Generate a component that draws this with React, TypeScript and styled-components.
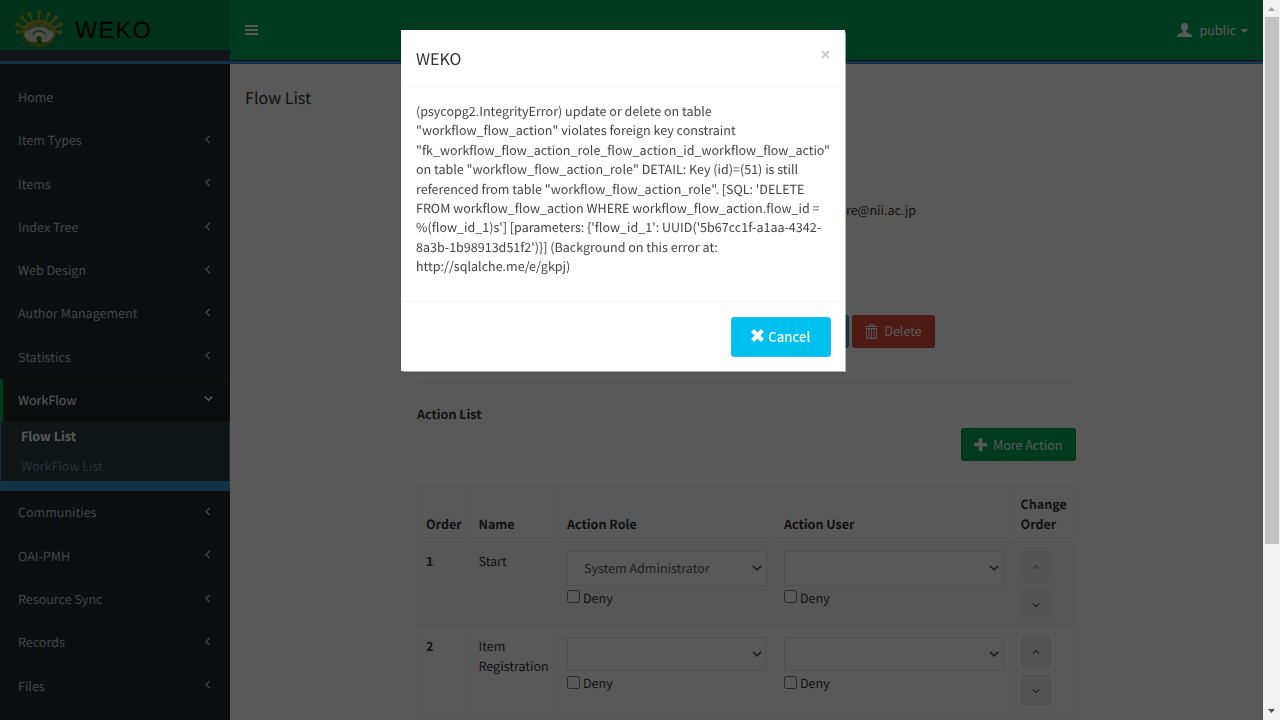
import React from "react";
import styled, { createGlobalStyle } from "styled-components";

const Global = createGlobalStyle`
  * { box-sizing: border-box; }
  html, body { margin: 0; padding: 0; overflow: hidden; }
  body {
    font-family: "Noto Sans CJK JP", "Noto Sans", sans-serif;
    font-size: 12.54px;
    line-height: 19.4px;
    color: #333;
    background: #fff;
    text-rendering: geometricPrecision;
  }
  svg { display: block; flex: none; }
`;

const Screen = styled.div`
  display: flex;
  width: 1280px;
  height: 720px;
  overflow: hidden;
`;
const Page = styled.div`
  display: flex;
  width: 1263px;
  height: 720px;
  overflow: hidden;
`;

/* Sidebar */
const Sidebar = styled.aside`
  width: 230px;
  flex: none;
  background: #222d32;
  overflow: hidden;
`;
const Brand = styled.div`
  display: flex;
  align-items: flex-start;
  height: 50px;
  padding: 10px 0 0 15px;
  gap: 12px;
  background: #008d4c;
`;
const BrandName = styled.span`
  font-family: "Liberation Sans", sans-serif;
  font-size: 23.5px;
  line-height: 41px;
  letter-spacing: 1.3px;
  color: #000;
`;
const BrandStrip = styled.div<{ $wide?: boolean }>`
  height: ${(p) => (p.$wide ? "14px" : "4px")};
  border-bottom: 3px solid #3a90c8;
  background: ${(p) => (p.$wide ? "#303c50" : "#222d50")};
`;
const Menu = styled.nav`
  padding-top: 11.5px;
`;
const MenuItem = styled.div<{ $active?: boolean }>`
  display: flex;
  align-items: center;
  justify-content: space-between;
  height: 43.3px;
  padding: ${(p) => (p.$active ? "0 17px 1.5px 15px" : "0 18px 1px 18px")};
  border-left: ${(p) => (p.$active ? "3px solid #00a65a" : "0")};
  color: ${(p) => (p.$active ? "#fff" : "#b8c7ce")};
  background: ${(p) => (p.$active ? "#1e282c" : "transparent")};
  svg { margin-top: -1px; }
`;
const SubMenu = styled.div`
  height: 69px;
  padding: 0 20px;
  border: 1px solid #3a90c8;
  border-top: 0;
  border-bottom-width: 10px;
  background: #2c3b41;
`;
const SubItem = styled.div<{ $active?: boolean }>`
  height: 30px;
  line-height: 27.8px;
  color: ${(p) => (p.$active ? "#fff" : "#8aa4af")};
  opacity: ${(p) => (p.$active ? 1 : 0.8)};
  font-weight: ${(p) => (p.$active ? 700 : 400)};
`;

/* Content */
const Main = styled.main`
  width: 1033px;
  flex: none;
`;
const TopBar = styled.header`
  display: flex;
  align-items: center;
  justify-content: space-between;
  height: 60px;
  padding: 0 15px;
  background: #00a65a;
  color: #fff;
`;
const UserMenu = styled.div`
  display: flex;
  align-items: center;
  svg:first-child { margin-right: 7px; margin-top: -1px; }
  svg:last-child { margin-left: 5px; margin-top: 2px; }
`;
const UserName = styled.span`
  padding-bottom: 1px;
`;
const PageTitle = styled.h1`
  margin: 0;
  padding: 21px 0 1px 15px;
  font-size: 16.1px;
  line-height: 24px;
  font-weight: 400;
`;
const Form = styled.section`
  width: 659px;
  margin-left: 187px;
`;
const MailLine = styled.div`
  margin-top: 90px;
  padding-right: 160px;
  height: 20px;
  line-height: 19px;
  text-align: right;
`;
const Actions = styled.div`
  display: flex;
  justify-content: flex-end;
  gap: 3px;
  margin-top: 95px;
  padding-right: 141px;
`;
const tones = { blue: "#3c8dbc", red: "#dd4b39", green: "#00a65a" };
const Button = styled.button<{ $tone: keyof typeof tones; $width: number }>`
  display: flex;
  align-items: center;
  justify-content: center;
  gap: 6px;
  width: ${(p) => p.$width}px;
  height: 33px;
  padding: 0 0 1px;
  border: 1px solid rgba(0, 0, 0, 0.08);
  border-radius: 3px;
  background: ${(p) => tones[p.$tone]};
  color: #fff;
  font: inherit;
`;
const Rule = styled.hr`
  margin: 34px 0 0;
  border: 0;
  border-top: 1px solid #f2f2f2;
`;
const SectionTitle = styled.h2`
  margin: 21px 0 5px;
  font-size: 12.53px;
  line-height: 19.4px;
  font-weight: 700;
`;
const RightRow = styled.div`
  display: flex;
  justify-content: flex-end;
  margin-bottom: 25px;
`;
const Grid = styled.div`
  border: 1px solid #f7f7f7;
`;
const Row = styled.div<{ $kind: "head" | "odd" | "even" }>`
  display: grid;
  grid-template-columns: 52.5px 88.5px 217px 236.5px 62.5px;
  height: ${(p) => (p.$kind === "head" ? "56px" : "85.2px")};
  align-items: stretch;
  border-bottom: ${(p) => (p.$kind === "head" ? "2px" : "1px")} solid #f7f7f7;
  background: ${(p) => (p.$kind === "odd" ? "#f9f9f9" : "#fff")};
`;
const Cell = styled.div<{ $bold?: boolean; $bottom?: boolean }>`
  display: flex;
  flex-direction: column;
  justify-content: ${(p) => (p.$bottom ? "flex-end" : "flex-start")};
  padding: ${(p) => (p.$bottom ? "0 8px 7px" : "8px 8px 0")};
  border-right: 1px solid #f7f7f7;
  font-weight: ${(p) => (p.$bold ? 700 : 400)};
  line-height: 20px;
  &:last-child { border-right: 0; }
`;
const CellText = styled.div`
  margin-top: -0.3px;
`;
const Select = styled.div`
  display: flex;
  align-items: center;
  justify-content: space-between;
  height: 34.500px;
  padding: 0 4px 1.5px 16px;
  border: 1px solid #e2e4e8;
  background: #fff;
  color: #555;
  svg { margin-top: 1px; }
`;
const Deny = styled.label`
  display: flex;
  align-items: center;
  gap: 3px;
  height: 20px;
  margin-top: 3px;
  line-height: 20px;
`;
const DenyText = styled.span`
  margin-top: -2px;
`;
const Box = styled.span`
  width: 13px;
  height: 13px;
  margin-top: -4px;
  border: 1px solid #767676;
  border-radius: 2.5px;
  background: #fff;
`;
const Mover = styled.button<{ $disabled?: boolean }>`
  display: flex;
  align-items: center;
  justify-content: center;
  width: 30px;
  height: 30px;
  margin: 0 0 8.5px;
  padding: 1px 0 0;
  border: 1px solid #e9e9e9;
  border-radius: 2px;
  background: #f2f2f2;
  color: #555;
  opacity: ${(p) => (p.$disabled ? 0.65 : 1)};
`;

/* Dialog */
const Backdrop = styled.div`
  position: fixed;
  top: 0;
  left: 0;
  width: 1263px;
  height: 720px;
  padding: 30px 17px 0 0;
  background: rgba(0, 0, 0, 0.65);
`;
const Dialog = styled.div`
  width: 444px;
  height: 341px;
  margin: 0 auto;
  background: #fff;
  color: #444;
  box-shadow: 0 2px 3px rgba(0, 0, 0, 0.125), 0.5px 0.5px 1px rgba(255, 255, 255, 0.6);
`;
const DialogHead = styled.div`
  display: flex;
  justify-content: space-between;
  height: 57px;
  padding: 16px 15.5px 0 15px;
  border-bottom: 1px solid #f7f7f7;
  font-size: 16px;
  line-height: 24px;
  color: #333;
  svg { margin-top: 4px; }
`;
const DialogBody = styled.p`
  margin: 0;
  height: 214px;
  padding: 14px 0 0 15px;
  white-space: nowrap;
`;
const DialogFoot = styled.div`
  display: flex;
  justify-content: flex-end;
  padding: 15px 14px 0;
  border-top: 1px solid #f7f7f7;
`;
const Cancel = styled.button`
  display: flex;
  align-items: center;
  justify-content: center;
  gap: 4px;
  width: 100.5px;
  height: 40px;
  padding: 0;
  border: 1px solid #22bfe8;
  border-radius: 3px;
  background: #00c0ef;
  color: #fff;
  font: inherit;
  font-size: 13.2px;
  font-weight: 500;
  svg { margin-top: -3px; }
`;

/* Window scroll bar */
const ScrollTrack = styled.div`
  display: flex;
  flex-direction: column;
  align-items: center;
  justify-content: space-between;
  width: 17px;
  height: 720px;
  padding: 7px 0;
  background: #f1f1f1;
`;
const ScrollThumb = styled.div`
  width: 14px;
  height: 527px;
  margin: 6px 0 auto;
  background: #c1c1c1;
`;

const Chevron = ({ dir, size = 9, weight = 1.4 }: { dir: "left" | "down" | "up"; size?: number; weight?: number }) => {
  const d = { left: "M6.5 1 3 4.5 6.5 8", down: "M.8 2.6 4.5 6.2 8.2 2.6", up: "M1 6.3 4.5 2.8 8 6.3" }[dir];
  return (
    <svg width={size} height={size} viewBox="0 0 9 9" fill="none" stroke="currentColor" strokeWidth={weight}>
      <path d={d} />
    </svg>
  );
};

const rays: [number, number, number, number][] = [
  [9, 22, 3, 22], [10, 18, 2, 14.5], [13, 14, 7, 7.5], [18, 12, 14.5, 4],
  [24, 11, 24, 2], [30, 12, 33.5, 4], [35, 14, 41, 7.5], [38, 18, 46, 14.5], [39, 22, 45, 22],
];
const Logo = () => (
  <svg width="48" height="38" viewBox="0 0 48 38">
    <g stroke="#a9a127" strokeWidth="2" fill="#a9a127">
      {rays.map(([a, b, c, d], i) => (
        <g key={i}>
          <path d={`M${a} ${b}L${c} ${d}`} />
          <circle cx={c} cy={d} r="1.200" />
        </g>
      ))}
    </g>
    <ellipse cx="24" cy="24" rx="17" ry="13" fill="#6f8a20" />
    <path d="M7.500 22C13 8 35 8 40.500 22" fill="none" stroke="#a9a127" strokeWidth="3" />
    <path d="M9 24C14 12 34 12 39 24Q38 29 33 32H15Q10 29 9 24Z" fill="#d8dcd2" />
    <path d="M12 20.500Q24 11.500 36 20.500M17 24.500Q24 17 31 24.500" fill="none" stroke="#4e8a3c" strokeWidth="1.400" />
    <path d="M8 25Q11 32 20 32.500H28Q37 32 40 25Q38 37 24 37T8 25" fill="#6f8a20" />
    <path d="M21.800 33V30A2.600 2.600 0 1 1 26.200 30V33Z" fill="#3b6a20" />
  </svg>
);

const message = [
  "(psycopg2.IntegrityError) update or delete on table",
  '"workflow_flow_action" violates foreign key constraint',
  '"fk_workflow_flow_action_role_flow_action_id_workflow_flow_actio"',
  'on table "workflow_flow_action_role" DETAIL: Key (id)=(51) is still',
  "referenced from table \"workflow_flow_action_role\". [SQL: 'DELETE",
  "FROM workflow_flow_action WHERE workflow_flow_action.flow_id =",
  "%(flow_id_1)s'] [parameters: {'flow_id_1': UUID('5b67cc1f-a1aa-4342-",
  "8a3b-1b98913d51f2')}] (Background on this error at:",
  "http://sqlalche.me/e/gkpj)",
];

const before = ["Item Types", "Items", "Index Tree", "Web Design", "Author Management", "Statistics"];
const after = ["Communities", "OAI-PMH", "Resource Sync", "Records", "Files"];

const rows = [
  { order: 1, name: "Start", role: "System Administrator" },
  { order: 2, name: "Item Registration", role: "" },
];

const Picker = ({ value }: { value: string }) => (
  <>
    <Select>
      <span>{value}</span>
      <Chevron dir="down" size={10} weight={1.5} />
    </Select>
    <Deny>
      <Box />
      <DenyText>Deny</DenyText>
    </Deny>
  </>
);

export default function App() {
  return (
    <>
      <Global />
      <Screen>
        <Page>
          <Sidebar>
            <Brand>
              <Logo />
              <BrandName>WEKO</BrandName>
            </Brand>
            <BrandStrip $wide />
            <Menu>
              <MenuItem>Home</MenuItem>
              {before.map((t) => (
                <MenuItem key={t}>
                  {t}
                  <Chevron dir="left" />
                </MenuItem>
              ))}
              <MenuItem $active>
                WorkFlow
                <Chevron dir="down" weight={1.6} />
              </MenuItem>
              <SubMenu>
                <SubItem $active>Flow List</SubItem>
                <SubItem>WorkFlow List</SubItem>
              </SubMenu>
              {after.map((t) => (
                <MenuItem key={t}>
                  {t}
                  <Chevron dir="left" />
                </MenuItem>
              ))}
            </Menu>
          </Sidebar>
          <Main>
            <TopBar>
              <svg width="13" height="10" viewBox="0 0 13 10" fill="#fff">
                <path d="M0 0h13v2H0zM0 4h13v2H0zM0 8h13v2H0z" />
              </svg>
              <UserMenu>
                <svg width="15" height="14" viewBox="0 0 15 14" fill="#fff">
                  <path d="M7.500 0C5.300 0 4 1.500 4 3.800C4 5.700 4.800 7.200 5.800 8V9.300C5 10 1.200 10.700.5 12C.2 12.600 0 13.400 0 14H15C15 13.400 14.800 12.600 14.500 12C13.800 10.700 10 10 9.200 9.300V8C10.200 7.200 11 5.700 11 3.800C11 1.500 9.700 0 7.500 0Z" />
                </svg>
                <UserName>public</UserName>
                <svg width="7" height="4" viewBox="0 0 7 4" fill="#fff">
                  <path d="M0 0h7L3.500 4z" />
                </svg>
              </UserMenu>
            </TopBar>
            <BrandStrip />
            <PageTitle>Flow List</PageTitle>
            <Form>
              <MailLine>re@nii.ac.jp</MailLine>
              <Actions>
                <Button $tone="blue" $width={75} aria-label="Save" />
                <Button $tone="red" $width={83}>
                  <svg width="13" height="15" viewBox="0 0 13 15" fill="none" stroke="#fff">
                    <path d="M0 2.500h13M4.500 2V.5h4V2M1.500 4.500h10v10h-10zM4 5v9M6.500 5v9M9 5v9" />
                  </svg>
                  Delete
                </Button>
              </Actions>
              <Rule />
              <SectionTitle>Action List</SectionTitle>
              <RightRow>
                <Button $tone="green" $width={115.5}>
                  <svg width="13" height="13" viewBox="0 0 13 13" fill="#fff">
                    <path d="M4.700 0h3.600v4.700H13v3.600H8.300V13H4.700V8.300H0V4.700h4.700z" />
                  </svg>
                  More Action
                </Button>
              </RightRow>
              <Grid>
                <Row $kind="head">
                  {["Order", "Name", "Action Role", "Action User", "Change Order"].map((h) => (
                    <Cell key={h} $bold $bottom>
                      {h}
                    </Cell>
                  ))}
                </Row>
                {rows.map((r, i) => (
                  <Row key={r.order} $kind={i % 2 ? "even" : "odd"}>
                    <Cell $bold>
                      <CellText>{r.order}</CellText>
                    </Cell>
                    <Cell>
                      <CellText>{r.name}</CellText>
                    </Cell>
                    <Cell>
                      <Picker value={r.role} />
                    </Cell>
                    <Cell>
                      <Picker value="" />
                    </Cell>
                    <Cell>
                      <Mover $disabled={i === 0}>
                        <Chevron dir="up" size={8} weight={1.3} />
                      </Mover>
                      <Mover>
                        <Chevron dir="down" size={8} weight={1.3} />
                      </Mover>
                    </Cell>
                  </Row>
                ))}
                <Row $kind="odd" />
              </Grid>
            </Form>
          </Main>
        </Page>
        <ScrollTrack>
          <svg width="7" height="4" viewBox="0 0 7 4" fill="#a3a3a3">
            <path d="M0 4h7L3.500 0z" />
          </svg>
          <ScrollThumb />
          <svg width="7" height="4" viewBox="0 0 7 4" fill="#505050">
            <path d="M0 0h7L3.500 4z" />
          </svg>
        </ScrollTrack>
      </Screen>
      <Backdrop>
        <Dialog>
          <DialogHead>
            WEKO
            <svg width="9" height="9" viewBox="0 0 9 9" stroke="#ccc" strokeWidth="2">
              <path d="M1 1l7 7M8 1L1 8" />
            </svg>
          </DialogHead>
          <DialogBody>
            {message.map((line) => (
              <React.Fragment key={line}>
                {line}
                <br />
              </React.Fragment>
            ))}
          </DialogBody>
          <DialogFoot>
            <Cancel>
              <svg width="13" height="13" viewBox="0 0 13 13" stroke="#fff" strokeWidth="4.200">
                <path d="M1.600 1.600l9.800 9.800M11.400 1.600L1.600 11.400" />
              </svg>
              Cancel
            </Cancel>
          </DialogFoot>
        </Dialog>
      </Backdrop>
    </>
  );
}
